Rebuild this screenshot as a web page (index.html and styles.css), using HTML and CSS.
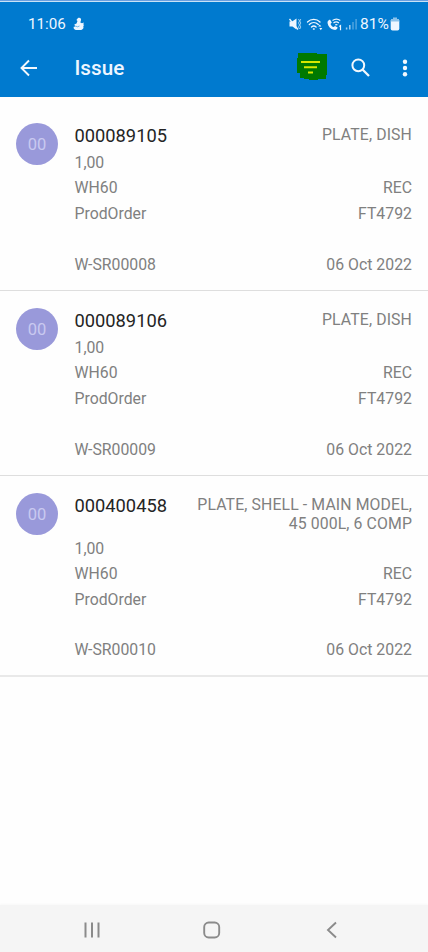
FILE: index.html
```html
<!DOCTYPE html>
<html lang="en">
<head>
<meta charset="utf-8">
<meta name="viewport" content="width=device-width">
<title>Issue</title>
<link rel="stylesheet" href="styles.css">
</head>
<body>
<header class="top">
  <div class="status">
    <span class="time">11:06</span>
    <svg class="notice" width="12" height="14" viewBox="0 0 12 14"><path d="M5 1c2-.8 3.500.5 3 2.200L7.300 5.500l1.700.7 1.800-.7-.5 2 .9.5-1 1c1 2-.5 4-3 4H4c-3 0-4-2-3-3.500L2.500 10 1.300 7.500l2.200-1L4.500 4 3.400 3z" fill="#eef6ff"/><path d="M2.500 9l2 .8 2-.8" stroke="#3a96dc" stroke-width=".7" fill="none"/></svg>
    <svg class="signals" width="70" height="16" viewBox="0 0 70 16">
      <path d="M.5 5.500h2.500L7.500 2.500v11L3.500 10.500H.5z" fill="#eef6ff"/>
      <path d="M.5 3l8.500 10.500" stroke="#eef6ff" stroke-width="1.300"/>
      <path d="M9.500 3l1 2-1 2 1 2-1 2 1 2M11.800 3l-1 2 1 2-1 2 1 2-1 2" stroke="#d9ecfa" stroke-width=".7" fill="none"/>
      <g fill="none" stroke="#eef6ff" stroke-width="1.300" stroke-linecap="round"><path d="M18.500 6c3.500-3.500 9-3.500 12.500 0M20.300 8.500c2.600-2.500 6.300-2.500 9 0M22.500 11c1.500-1.300 3.200-1.300 4.600 0"/><path d="M24.400 13h.8"/></g>
      <path d="M29.300 10.500l1.500-2 1.500 2zM30.300 12l1.500 2.200 1.500-2.200z" fill="#eef6ff"/>
      <path d="M41 3.500l1.800 3-1.300 1.400c.7 1.600 1.600 2.500 3.200 3.200l1.300-1.200 2.700 1.600c-.5 2-1.900 2.700-3.700 2.300-3.600-.8-5.900-3.300-6.400-6.600-.3-1.700.5-3 2.400-3.700z" fill="#eef6ff"/>
      <path d="M43.500 4.500c2.500-1.900 5.500-1.700 7.800 0M44.500 6.900c1.700-1.300 3.700-1.300 5.400 0M46.200 8.900c.8-.5 1.500-.5 2.200 0M50.300 10.500l1.200-.9v4.600" fill="none" stroke="#eef6ff" stroke-width="1.200"/>
      <path d="M57.600 11.500v2M60.800 9v4.500" stroke="#9fcdef" stroke-width="1.500"/><path d="M64 6v7.500M67.100 3v10.500" stroke="#4fa4de" stroke-width="1.500"/>
    </svg>
    <span class="percent">81%</span>
    <svg class="battery" width="10" height="14" viewBox="0 0 10 14"><rect x="3" y=".5" width="4" height="2" fill="#8bc2eb"/><rect x=".7" y="2" width="8.600" height="11.500" rx="1.800" fill="#eef6ff"/><path d="M.7 4.500V3.800Q.7 2 2.500 2h5q1.800 0 1.800 1.800v.7z" fill="#8bc2eb"/></svg>
  </div>
  <div class="bar">
    <svg class="back" width="18" height="18" viewBox="0 0 18 18"><path d="M17 9H2M9 1.500L1.500 9 9 16.500" fill="none" stroke="#f2f8fd" stroke-width="1.900"/></svg>
    <h1>Issue</h1>
    <svg class="filter" width="30" height="28" viewBox="0 0 30 28"><path d="M1 0h19v1h10v21h-1v4h-8v1h-9v-1H7v-1H3v-5H0V5h1z" fill="#007900"/><path d="M4 9h19M7 14.300h13M11 19.500h5" stroke="#d8e800" stroke-width="2"/></svg>
    <svg class="search" width="20" height="20" viewBox="0 0 20 20"><circle cx="7.300" cy="7.300" r="5.900" fill="none" stroke="#f2f8fd" stroke-width="2"/><path d="M11.500 11.500l6.500 6.500" stroke="#f2f8fd" stroke-width="2.300"/></svg>
    <svg class="more" width="6" height="18" viewBox="0 0 6 18"><g fill="#f2f8fd"><circle cx="3" cy="2.700" r="2.200"/><circle cx="3" cy="9" r="2.200"/><circle cx="3" cy="15.300" r="2.200"/></g></svg>
  </div>
</header>
<main class="list">
  <article class="item">
    <div class="avatar">00</div>
    <div class="details">
      <div class="head"><h2>000089105</h2><p>PLATE, DISH</p></div>
      <div class="line"><span>1,00</span></div>
      <div class="line"><span>WH60</span><span>REC</span></div>
      <div class="line"><span>ProdOrder</span><span>FT4792</span></div>
      <div class="line foot"><span>W-SR00008</span><span>06 Oct 2022</span></div>
    </div>
  </article>
  <article class="item">
    <div class="avatar">00</div>
    <div class="details">
      <div class="head"><h2>000089106</h2><p>PLATE, DISH</p></div>
      <div class="line"><span>1,00</span></div>
      <div class="line"><span>WH60</span><span>REC</span></div>
      <div class="line"><span>ProdOrder</span><span>FT4792</span></div>
      <div class="line foot"><span>W-SR00009</span><span>06 Oct 2022</span></div>
    </div>
  </article>
  <article class="item">
    <div class="avatar">00</div>
    <div class="details">
      <div class="head"><h2>000400458</h2><p>PLATE, SHELL - MAIN MODEL,<br>45 000L, 6 COMP</p></div>
      <div class="line"><span>1,00</span></div>
      <div class="line"><span>WH60</span><span>REC</span></div>
      <div class="line"><span>ProdOrder</span><span>FT4792</span></div>
      <div class="line foot"><span>W-SR00010</span><span>06 Oct 2022</span></div>
    </div>
  </article>
</main>
<nav class="nav">
  <svg width="18" height="18" viewBox="0 0 18 18"><path d="M2.500 1.500v15M9 1.500v15M15.500 1.500v15" stroke="#8b8b8b" stroke-width="2"/></svg>
  <svg width="18" height="18" viewBox="0 0 18 18"><rect x="1.200" y="1.500" width="15" height="15" rx="4.500" fill="none" stroke="#8b8b8b" stroke-width="1.900"/></svg>
  <svg width="18" height="18" viewBox="0 0 18 18"><path d="M13 1.500L5 9l8 7.500" fill="none" stroke="#8b8b8b" stroke-width="1.900"/></svg>
</nav>
</body>
</html>
```
FILE: styles.css
```css
* { box-sizing: border-box; }
body {
  margin: 0;
  height: 952px;
  display: flex;
  flex-direction: column;
  background: #fefefe;
  color: #808080;
  font-family: Roboto, "Liberation Sans", sans-serif;
  font-size: 15.800px;
  overflow: hidden;
}
h1, h2, p { margin: 0; }
svg { display: block; flex: none; }
.top {
  height: 97px;
  background: #007acf;
  border-top: 1px solid #6a9fe0;
  box-shadow: inset 0 1px #c9e2f6;
  color: #eef6ff;
}
.status { height: 44px; padding: 1px 27px 0 28px; display: flex; align-items: center; }
.time { width: 38px; font-size: 15.200px; }
.notice { margin-left: 7px; }
.signals { margin-left: auto; }
.percent { width: 30px; margin-left: 1px; font-size: 15.500px; white-space: nowrap; }
.battery { margin-right: 1px; }
.bar { height: 46px; padding: 0 20px; display: flex; align-items: center; }
.back, .search, .more { position: relative; top: -.5px; }
h1 { margin-left: 36.500px; font-size: 20.700px; line-height: 28px; font-weight: 500; }
.filter { margin-left: auto; position: relative; top: -1px; }
.search { margin-left: 24px; }
.more { margin-left: 31px; }
.list { flex: 1; padding-top: 9px; }
.item { display: flex; padding: 19px 16px 13px; border-bottom: 1px solid #dedede; }
.avatar {
  width: 42px;
  height: 42px;
  margin: -2px 16.500px 0 0;
  flex: none;
  border-radius: 50%;
  background: #9999da;
  color: #c9c9f0;
  text-align: center;
  line-height: 43px;
  font-size: 16.500px;
}
.details { flex: 1; }
.head { display: flex; justify-content: space-between; min-height: 25px; padding-bottom: 2.500px; }
h2 { font-size: 18.300px; line-height: 22px; font-weight: 400; color: #242424; }
.head p { padding-top: 1px; line-height: 18.700px; letter-spacing: .12px; text-align: right; white-space: nowrap; }
.line { display: flex; justify-content: space-between; height: 25.400px; line-height: 25.400px; }
.line span + span { letter-spacing: .03px; }
.foot { margin-top: 25.400px; }
.item:last-child { padding-bottom: 12.300px; border-bottom-width: 2px; border-color: #e9e9e9; }
.nav {
  height: 47px;
  display: flex;
  align-items: center;
  justify-content: space-between;
  padding: 2px 87px 0 83px;
  background: #f5f5f5;
  box-shadow: 0 -1px 2px #f8f8f8;
}
```
